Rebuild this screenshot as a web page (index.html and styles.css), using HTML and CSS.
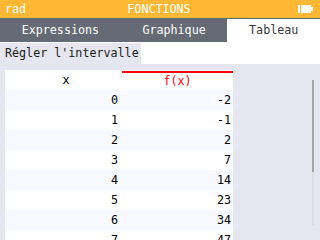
FILE: index.html
```html
<!DOCTYPE html>
<html lang="fr">
<head>
    <meta charset="UTF-8">
    <title>Fonctions</title>
    <link rel="stylesheet" href="styles.css">
</head>
<body>

<div class="title-bar">
    <span class="angle">rad</span>
    <span class="title">FONCTIONS</span>
    <span class="battery">
        <svg width="15" height="8" viewBox="0 0 15 8">
            <rect x="0" y="0" width="2" height="8" fill="#fff"/>
            <rect x="3" y="0" width="10" height="8" fill="#fff"/>
            <rect x="13" y="2" width="2" height="4" fill="#fff"/>
        </svg>
    </span>
</div>

<div class="tabs">
    <div class="tab">Expressions</div>
    <div class="tab">Graphique</div>
    <div class="tab active">Tableau</div>
</div>

<div class="toolbar">
    <div class="range-btn">Régler l'intervalle</div>
</div>

<div class="table-area">
    <div class="values">
        <div class="row head">
            <div class="cell">x</div>
            <div class="cell fx">f(x)</div>
        </div>
        <div class="row"><div class="cell">0</div><div class="cell">-2</div></div>
        <div class="row"><div class="cell">1</div><div class="cell">-1</div></div>
        <div class="row"><div class="cell">2</div><div class="cell">2</div></div>
        <div class="row"><div class="cell">3</div><div class="cell">7</div></div>
        <div class="row"><div class="cell">4</div><div class="cell">14</div></div>
        <div class="row"><div class="cell">5</div><div class="cell">23</div></div>
        <div class="row"><div class="cell">6</div><div class="cell">34</div></div>
        <div class="row"><div class="cell">7</div><div class="cell">47</div></div>
    </div>
    <div class="scrollbar">
        <div class="thumb"></div>
    </div>
</div>

</body>
</html>
```

FILE: styles.css
```css
body {
    margin: 0;
    width: 320px;
    height: 240px;
    overflow: hidden;
    background-color: #fff;
    font-family: "DejaVu Sans Mono", monospace;
    font-size: 11.7px;
    color: #000;
}
.title-bar {
    height: 18px;
    background-color: #ffb734;
    color: #fff;
    display: grid;
    grid-template-columns: 1fr auto 1fr;
    align-items: center;
    padding: 0 7px 0 5px;
}
.title-bar .battery {
    justify-self: end;
    display: flex;
}
.tabs {
    display: flex;
    height: 23px;
    padding-top: 1px;
    background-color: #656a74;
}
.tab {
    flex: auto;
    text-align: center;
    line-height: 23px;
    color: #fff;
}
.tab.active {
    background-color: #fff;
    color: #3a3a3a;
}
.toolbar {
    margin-top: 1px;
    height: 21px;
}
.range-btn {
    display: inline-block;
    width: 136px;
    padding-left: 5px;
    line-height: 21px;
    background-color: #e5e6ef;
    color: #1a1a1a;
}
.table-area {
    display: flex;
    height: 176px;
    padding: 6px 0 0 5px;
    box-sizing: border-box;
    background-color: #e5e6ef;
}
.values {
    width: 228px;
}
.row {
    display: grid;
    grid-template-columns: 117px 111px;
    height: 20px;
    background-color: #fff;
}
.row:nth-child(even) {
    background-color: #f7f9fe;
}
.cell {
    line-height: 20px;
    text-align: right;
    padding-right: 4px;
}
.cell + .cell {
    padding-right: 2px;
}
.row.head {
    height: 19px;
    padding-top: 1px;
}
.row.head .cell {
    text-align: center;
    line-height: 19px;
    padding: 0 0 0 5px;
}
.row.head .fx {
    color: #ff000c;
    border-top: 2px solid #ff000c;
    line-height: 17px;
    padding: 0;
}
.scrollbar {
    margin: 10px 6px 0 auto;
    width: 2px;
    height: 145px;
    background-color: #dcdce3;
}
.thumb {
    height: 92px;
    background-color: #a6a6a6;
}
```
